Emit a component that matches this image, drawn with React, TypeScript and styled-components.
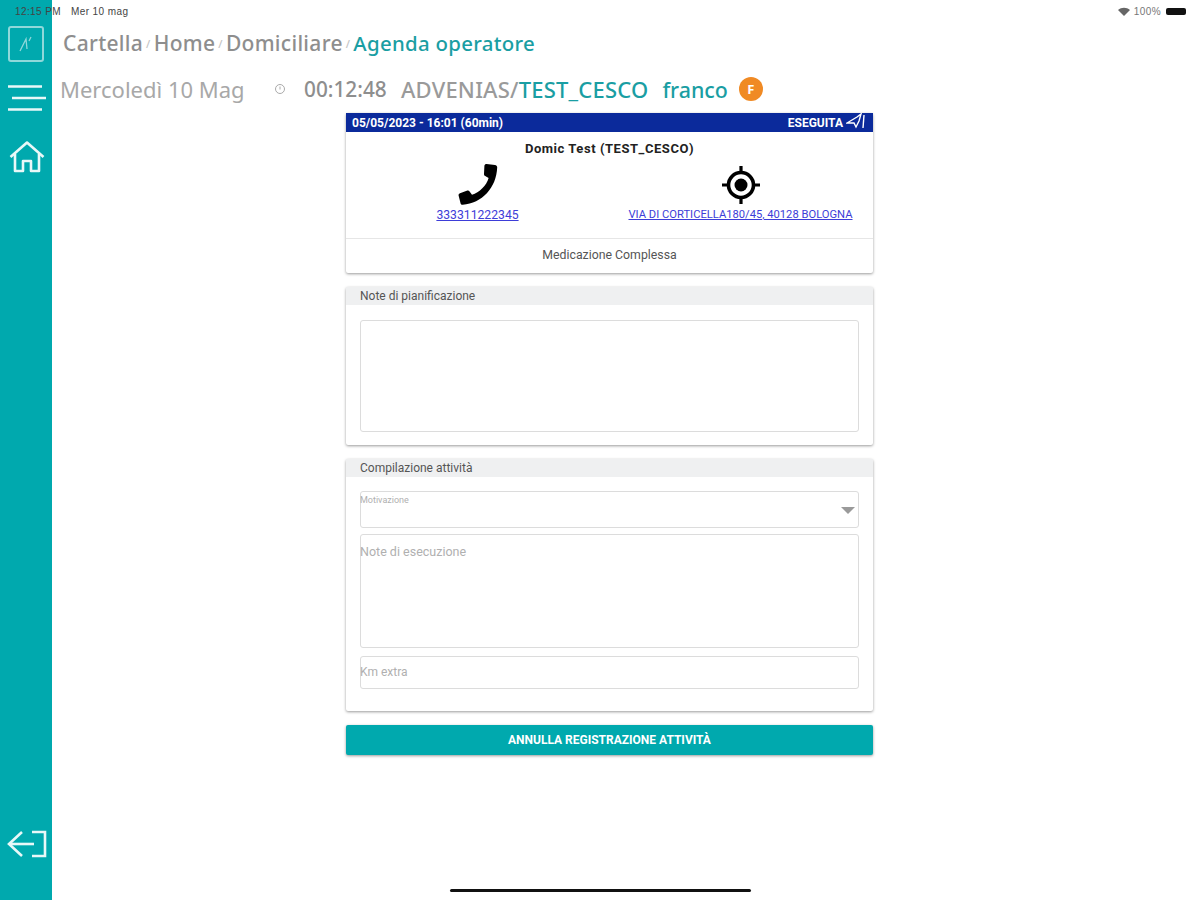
import React from 'react'
import styled, { createGlobalStyle } from 'styled-components'

const GlobalStyle = createGlobalStyle`
  html, body {
    margin: 0;
    padding: 0;
    background: #fff;
  }
  * {
    box-sizing: border-box;
  }
`

const Page = styled.div`
  position: relative;
  display: flex;
  width: 1200px;
  height: 900px;
  overflow: hidden;
  background: #fff;
  font-family: 'Noto Sans', sans-serif;
`

const StatusBar = styled.div`
  position: absolute;
  top: 5px;
  left: 15px;
  right: 14px;
  height: 12px;
  display: flex;
  align-items: center;
  justify-content: space-between;
  font-family: 'Liberation Sans', sans-serif;
  font-size: 10px;
  letter-spacing: 0.4px;
  color: #444;
`

const StatusGroup = styled.div`
  display: flex;
  align-items: center;
  gap: 10px;
`

const StatusRight = styled(StatusGroup)`
  gap: 4px;
  color: #777;
`

const Battery = styled.span`
  width: 20px;
  height: 7px;
  margin-left: 1px;
  background: #111;
  border-radius: 2px;
`

const HomeIndicator = styled.div`
  position: absolute;
  left: 450px;
  bottom: 8px;
  width: 301px;
  height: 3px;
  border-radius: 2px;
  background: #111;
`

const Sidebar = styled.aside`
  flex: 0 0 52px;
  height: 900px;
  padding: 26px 0 42px;
  display: flex;
  flex-direction: column;
  align-items: center;
  background: #00a9ae;
`

const LogoBox = styled.div`
  width: 36px;
  height: 36px;
  border: 2px solid #8fd8da;
  border-radius: 3px;
  display: flex;
  align-items: center;
  justify-content: center;
`

const MenuIcon = styled.svg`
  margin-top: 23px;
  margin-left: 1px;
`

const HomeIcon = styled.svg`
  margin-top: 30px;
  margin-left: 2px;
`

const ExitIcon = styled.svg`
  margin-top: auto;
  margin-left: 3px;
`

const Main = styled.main`
  flex: 1;
  display: flex;
  flex-direction: column;
  min-width: 0;
`

const Breadcrumb = styled.nav`
  height: 24px;
  margin-top: 31px;
  padding-left: 11px;
  display: flex;
  align-items: center;
  font-size: 21px;
  letter-spacing: 0.3px;
  font-weight: 500;
  color: #8e8e8e;
`

const Crumb = styled.span<{ $active?: boolean }>`
  color: ${(p) => (p.$active ? '#1a9ea3' : '#8e8e8e')};
  font-size: ${(p) => (p.$active ? 20.4 : 21)}px;
`

const Sep = styled.span`
  margin: 0 3px;
  font-size: 11px;
  color: #c4c4c4;
`

const InfoRow = styled.div`
  height: 28px;
  margin-top: 20px;
  padding-left: 8px;
  display: flex;
  align-items: center;
  font-size: 22px;
  color: #a8a8a8;
`

const DateText = styled.span`
  width: 214px;
`

const ClockIcon = styled.svg`
  margin-right: 18px;
`

const Time = styled.span`
  width: 97px;
  font-size: 20.8px;
  font-weight: 500;
  color: #8e8e8e;
`

const Org = styled.span`
  color: #9a9a9a;
  font-weight: 500;
  letter-spacing: 0.2px;
`

const Teal = styled.span`
  color: #1a9ea3;
  font-weight: 500;
  letter-spacing: 0.2px;
`

const UserName = styled(Teal)`
  margin-left: 14px;
  font-size: 21.4px;
  letter-spacing: 0;
`

const Avatar = styled.span`
  width: 24px;
  height: 24px;
  margin-left: 11px;
  border-radius: 50%;
  display: flex;
  align-items: center;
  justify-content: center;
  background: #f08a24;
  color: #fff;
  font-size: 13px;
  font-weight: 700;
`

const Content = styled.div`
  width: 527px;
  margin-left: 294px;
  margin-top: 10px;
  display: flex;
  flex-direction: column;
  gap: 14px;
  font-family: Roboto, sans-serif;
`

const Card = styled.section<{ $height: number }>`
  height: ${(p) => p.$height}px;
  background: #fff;
  border-radius: 2px;
  box-shadow: 0 1px 3px rgba(0, 0, 0, 0.4);
`

const AppointmentBar = styled.div`
  height: 19px;
  padding: 0 7px 0 6px;
  display: flex;
  align-items: center;
  justify-content: space-between;
  background: #0b2a9b;
  color: #fff;
  font-size: 12px;
  font-weight: 700;
`

const BarStatus = styled.span`
  display: flex;
  align-items: center;
  gap: 3px;
`

const Patient = styled.div`
  margin-top: 9px;
  text-align: center;
  font-size: 13px;
  font-weight: 700;
  letter-spacing: 0.55px;
  color: #222;
`

const Contacts = styled.div`
  height: 74px;
  margin-top: 8px;
  padding-left: 90px;
  display: flex;
  align-items: flex-start;
  gap: 109px;
`

const Contact = styled.div<{ $width: number }>`
  width: ${(p) => p.$width}px;
  display: flex;
  flex-direction: column;
  align-items: center;
  gap: 2px;
`

const ContactLink = styled.a<{ $size: number }>`
  color: #3d3dd8;
  font-size: ${(p) => p.$size}px;
  text-decoration: underline;
  white-space: nowrap;
`

const Activity = styled.div`
  height: 33px;
  border-top: 1px solid #e6e6e6;
  display: flex;
  align-items: center;
  justify-content: center;
  font-size: 12.3px;
  color: #555;
`

const CardTitle = styled.h3`
  height: 18px;
  margin: 0;
  padding-left: 14px;
  display: flex;
  align-items: center;
  background: #eff0f1;
  font-size: 12px;
  font-weight: 400;
  color: #555;
`

const Fields = styled.div<{ $top: number }>`
  padding: ${(p) => p.$top}px 14px 0;
  display: flex;
  flex-direction: column;
`

const Field = styled.div<{ $height: number; $gap?: number }>`
  position: relative;
  height: ${(p) => p.$height}px;
  margin-bottom: ${(p) => p.$gap ?? 0}px;
  border: 1px solid #dcdcdc;
  border-radius: 3px;
`

const Placeholder = styled.span<{ $size: number; $top: number }>`
  display: block;
  margin-top: ${(p) => p.$top}px;
  margin-left: -1px;
  font-size: ${(p) => p.$size}px;
  color: #b0b0b0;
`

const Caret = styled.span`
  position: absolute;
  right: 3px;
  top: 15px;
  width: 0;
  height: 0;
  border-left: 7px solid transparent;
  border-right: 7px solid transparent;
  border-top: 7px solid #9a9a9a;
`

const CancelButton = styled.button`
  height: 30px;
  border: 0;
  border-radius: 2px;
  background: #00a9ae;
  box-shadow: 0 1px 3px rgba(0, 0, 0, 0.4);
  color: #fff;
  font-family: Roboto, sans-serif;
  font-size: 12px;
  font-weight: 700;
`

const App = () => {
  return (
    <>
      <GlobalStyle />
      <Page>
        <Sidebar>
          <LogoBox>
            <svg width="20" height="20" viewBox="0 0 20 20" fill="none" stroke="#8fd8da" strokeWidth="1.3">
              <path d="M4 17 L10 5 L11 15" />
              <path d="M13 7 L15 3" />
            </svg>
          </LogoBox>
          <MenuIcon width="38" height="26" viewBox="0 0 38 26" stroke="#e8f8f8" strokeWidth="2.5">
            <path d="M0 1.5 H34" />
            <path d="M4 13 H38" />
            <path d="M0 24.5 H34" />
          </MenuIcon>
          <HomeIcon width="36" height="32" viewBox="0 0 36 32" fill="none" stroke="#e8f8f8" strokeWidth="2.6" strokeLinejoin="round">
            <path d="M1.5 16 L18 1.5 L34.5 16" />
            <path d="M6 13 V30 H14 V20 H22 V30 H30 V13" />
          </HomeIcon>
          <ExitIcon width="41" height="28" viewBox="0 0 41 28" fill="none" stroke="#e8f8f8" strokeWidth="2.6">
            <path d="M15 2 L2 14 L15 26" />
            <path d="M2 14 H27" />
            <path d="M25 2 H38 V26 H25" />
          </ExitIcon>
        </Sidebar>
        <Main>
          <Breadcrumb>
            <Crumb>Cartella</Crumb>
            <Sep>/</Sep>
            <Crumb>Home</Crumb>
            <Sep>/</Sep>
            <Crumb>Domiciliare</Crumb>
            <Sep>/</Sep>
            <Crumb $active>Agenda operatore</Crumb>
          </Breadcrumb>
          <InfoRow>
            <DateText>Mercoledì 10 Mag</DateText>
            <ClockIcon width="12" height="12" viewBox="0 0 12 12" fill="none" stroke="#aaa" strokeWidth="1">
              <circle cx="6" cy="6" r="4.5" />
              <path d="M6 3.5 V6.5" />
            </ClockIcon>
            <Time>00:12:48</Time>
            <Org>ADVENIAS/</Org>
            <Teal>TEST_CESCO</Teal>
            <UserName>franco</UserName>
            <Avatar>F</Avatar>
          </InfoRow>
          <Content>
            <Card $height={160}>
              <AppointmentBar>
                <span>05/05/2023 - 16:01 (60min)</span>
                <BarStatus>
                  ESEGUITA
                  <svg width="20" height="19" viewBox="0 0 20 19" fill="none" stroke="#fff" strokeWidth="1.4">
                    <path d="M1 10 L11 4 L15 1 L13 8 L10 14 L8 10 Z" />
                    <path d="M18 2 L17 15" />
                  </svg>
                </BarStatus>
              </AppointmentBar>
              <Patient>Domic Test (TEST_CESCO)</Patient>
              <Contacts>
                <Contact $width={83}>
                  <svg width="42" height="42" viewBox="2 1 20 21" fill="#000">
                    <path d="M20.5 1.5 L16.3 1 C15.7 1 15.3 1.3 15.2 1.9 L15 6 C15 6.5 15.2 6.8 15.6 7 L17.3 8 C16.3 11.7 12.7 15.3 9 16.4 L7.8 14.7 C7.5 14.3 7.1 14.2 6.7 14.3 L3 15.6 C2.4 15.8 2.2 16.3 2.3 16.8 L3.3 20.7 C3.4 21.2 3.9 21.5 4.4 21.4 C14 20.5 21.2 13 21.6 2.6 C21.6 2 21.1 1.6 20.5 1.5 Z" />
                  </svg>
                  <ContactLink href="#" $size={12.2}>
                    333311222345
                  </ContactLink>
                </Contact>
                <Contact $width={225}>
                  <svg width="42" height="42" viewBox="0 0 42 42" fill="none" stroke="#000">
                    <circle cx="21" cy="21" r="12.5" strokeWidth="3.6" />
                    <circle cx="21" cy="21" r="6.5" fill="#000" stroke="none" />
                    <path d="M21 2 V9 M21 33 V40 M2 21 H9 M33 21 H40" strokeWidth="3.2" />
                  </svg>
                  <ContactLink href="#" $size={11.2}>
                    VIA DI CORTICELLA180/45, 40128 BOLOGNA
                  </ContactLink>
                </Contact>
              </Contacts>
              <Activity>Medicazione Complessa</Activity>
            </Card>
            <Card $height={158}>
              <CardTitle>Note di pianificazione</CardTitle>
              <Fields $top={15}>
                <Field $height={112} />
              </Fields>
            </Card>
            <Card $height={252}>
              <CardTitle>Compilazione attività</CardTitle>
              <Fields $top={14}>
                <Field $height={37} $gap={6}>
                  <Placeholder $size={9} $top={3}>
                    Motivazione
                  </Placeholder>
                  <Caret />
                </Field>
                <Field $height={114} $gap={8}>
                  <Placeholder $size={12.5} $top={9}>
                    Note di esecuzione
                  </Placeholder>
                </Field>
                <Field $height={33}>
                  <Placeholder $size={12} $top={8}>
                    Km extra
                  </Placeholder>
                </Field>
              </Fields>
            </Card>
            <CancelButton>ANNULLA REGISTRAZIONE ATTIVITÀ</CancelButton>
          </Content>
        </Main>
        <StatusBar>
          <StatusGroup>
            <span>12:15 PM</span>
            <span>Mer 10 mag</span>
          </StatusGroup>
          <StatusRight>
            <svg width="12" height="9" viewBox="0 0 12 9" fill="#666">
              <path d="M0 3 C3.5 0 8.5 0 12 3 L6 9 Z" />
            </svg>
            <span>100%</span>
            <Battery />
          </StatusRight>
        </StatusBar>
        <HomeIndicator />
      </Page>
    </>
  )
}

export default App
